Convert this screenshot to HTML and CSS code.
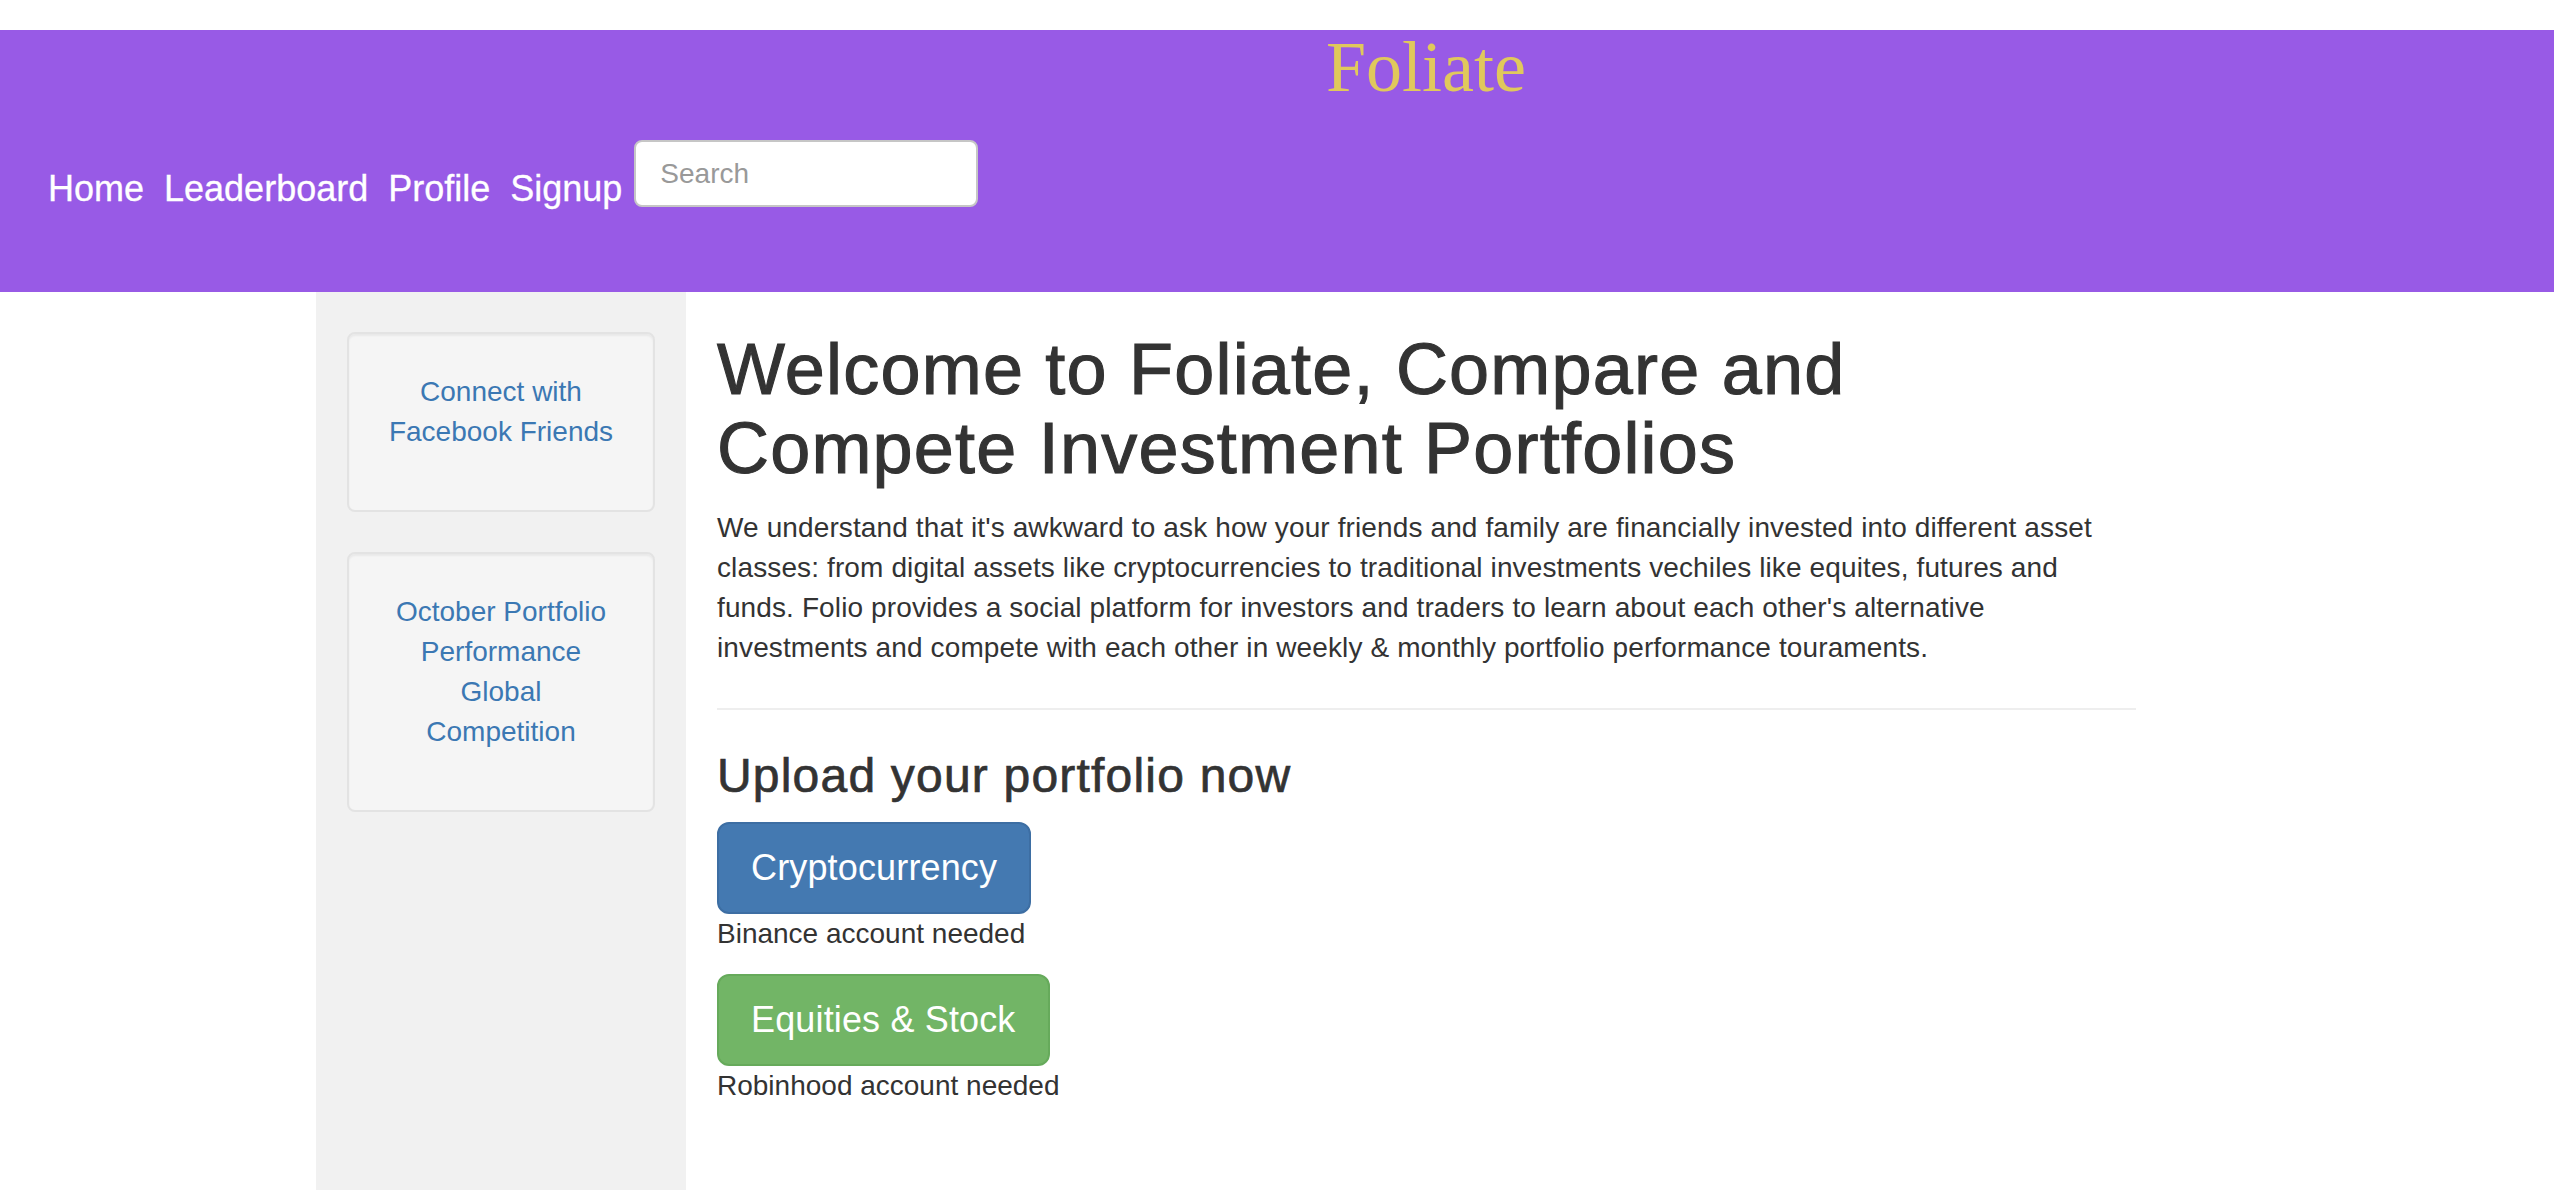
FILE: index.html
```html
<!DOCTYPE html>
<html lang="en">
<head>
<meta charset="utf-8">
<title>Foliate</title>
<link rel="stylesheet" href="styles.css">
</head>
<body>
<header class="topbar">
  <h1 class="brand">Foliate</h1>
  <nav class="nav">
    <div class="nav-links">
      <a class="nav-link" href="#">Home</a>
      <a class="nav-link" href="#">Leaderboard</a>
      <a class="nav-link" href="#">Profile</a>
      <a class="nav-link" href="#">Signup</a>
    </div>
    <input class="search" type="text" placeholder="Search">
  </nav>
</header>
<div class="content">
  <aside class="sidenav">
    <div class="well"><p><a class="side-link" href="#">Connect with Facebook Friends</a></p></div>
    <div class="well"><p><a class="side-link" href="#">October Portfolio Performance Global Competition</a></p></div>
  </aside>
  <main class="main">
    <h1 class="title">Welcome to Foliate, Compare and Compete Investment Portfolios</h1>
    <p class="intro">We understand that it's awkward to ask how your friends and family are financially invested into different asset classes: from digital assets like cryptocurrencies to traditional investments vechiles like equites, futures and funds. Folio provides a social platform for investors and traders to learn about each other's alternative investments and compete with each other in weekly &amp; monthly portfolio performance touraments.</p>
    <hr class="divider">
    <h3 class="subtitle">Upload your portfolio now</h3>
    <a class="btn btn-blue" href="#">Cryptocurrency</a>
    <p class="note">Binance account needed</p>
    <a class="btn btn-green" href="#">Equities &amp; Stock</a>
    <p class="note">Robinhood account needed</p>
  </main>
</div>
</body>
</html>
```
FILE: styles.css
```css
* { box-sizing: border-box; }

html, body { margin: 0; }

body {
  padding-top: 30px;
  min-height: 100vh;
  display: flex;
  flex-direction: column;
  font-family: "Liberation Sans", Arial, sans-serif;
  font-size: 28px;
  line-height: 40px;
  color: #333333;
  background: #ffffff;
}

.topbar {
  background: #985ae6;
  padding: 1px 0 82px;
}

.brand {
  margin: 0;
  padding-left: 298px;
  text-align: center;
  font-family: "Liberation Serif", "Times New Roman", serif;
  font-weight: normal;
  font-size: 72px;
  line-height: 72px;
  color: #e0c85c;
}

.nav {
  margin-top: 37px;
  padding-left: 48px;
  display: flex;
  align-items: flex-start;
  gap: 12px;
}

.nav-links {
  display: flex;
  gap: 20px;
  padding-top: 28px;
}

.nav-link {
  color: #ffffff;
  text-decoration: none;
  font-size: 36px;
  line-height: 42px;
  -webkit-text-stroke: 0.3px #ffffff;
}

.search {
  width: 344px;
  height: 67px;
  margin: 0;
  padding: 0 24px;
  border: 2px solid #c6c6c6;
  border-radius: 8px;
  background: #ffffff;
  font-family: "Liberation Sans", Arial, sans-serif;
  font-size: 28px;
  color: #555555;
  outline: none;
}

.search::placeholder { color: #999999; }

.content {
  flex: 1;
  display: flex;
  align-items: stretch;
  padding-left: 316px;
}

.sidenav {
  width: 370px;
  flex: none;
  background: #f1f1f1;
  padding: 40px 31px 0;
  text-align: center;
}

.well {
  background: #f5f5f5;
  border: 2px solid #e3e3e3;
  border-radius: 8px;
  padding: 38px;
  margin-bottom: 40px;
  box-shadow: inset 0 2px 2px rgba(0, 0, 0, 0.05);
}

.well p { margin: 0 0 20px; }

.side-link {
  color: #3b78b3;
  text-decoration: none;
}

.main {
  width: 1481px;
  flex: none;
  padding: 0 31px;
}

.title {
  margin: 38px 0 20px;
  font-size: 72px;
  line-height: 1.1;
  font-weight: normal;
  letter-spacing: 1.2px;
  color: #333333;
  -webkit-text-stroke: 1.1px #333333;
}

.intro {
  margin: 0 0 20px;
  letter-spacing: 0.12px;
}

.divider {
  margin: 40px 0;
  border: 0;
  border-top: 2px solid #eeeeee;
  height: 0;
}

.subtitle {
  margin: 40px 0 19px;
  font-size: 48px;
  line-height: 1.1;
  font-weight: normal;
  letter-spacing: 1.2px;
  color: #333333;
  -webkit-text-stroke: 0.7px #333333;
}

.btn {
  display: block;
  width: fit-content;
  padding: 20px 32px;
  border: 2px solid transparent;
  border-radius: 12px;
  font-size: 36px;
  line-height: 48px;
  color: #ffffff;
  text-decoration: none;
  letter-spacing: 0.15px;
}

.btn-blue {
  background: #4479b1;
  border-color: #3d6ea3;
}

.btn-green {
  background: #72b566;
  border-color: #66aa5b;
}

.note { margin: 0 0 20px; }
```
